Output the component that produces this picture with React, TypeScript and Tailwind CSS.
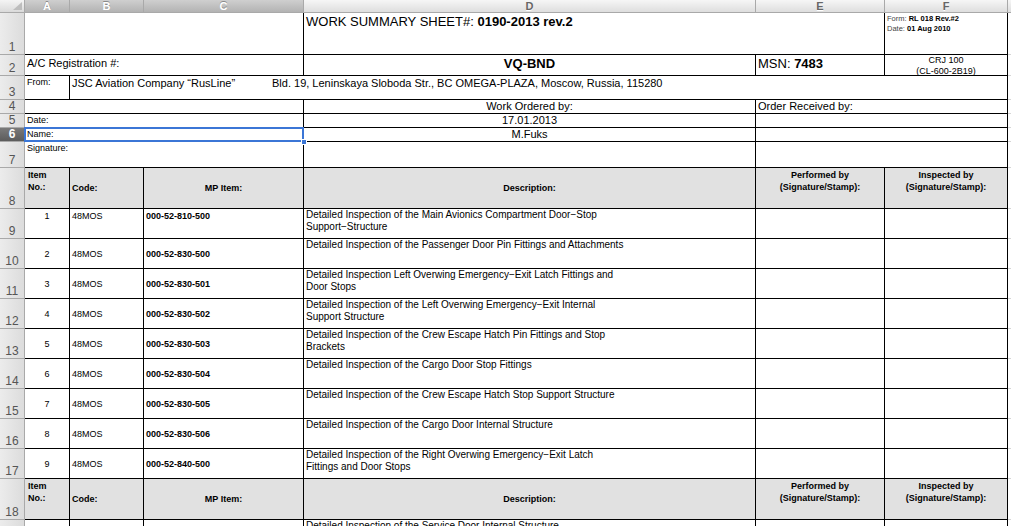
import React from "react";

type CellProps = {
  className?: string;
  children?: React.ReactNode;
};

function Cell({ className = "", children }: CellProps) {
  return <div className={`min-w-0 overflow-hidden whitespace-nowrap ${className}`}>{children}</div>;
}

function RowHead({ n, active = false }: { n?: number; active?: boolean }) {
  return (
    <div
      className={`flex items-end justify-center border-r border-b border-[#a9a9a9] pb-[1px] text-[12px] leading-none ${
        active ? "bg-gradient-to-b from-[#7a7a7a] to-[#5c5c5c] text-white font-bold" : "bg-gradient-to-r from-[#ececec] to-[#dcdcdc] text-[#555]"
      }`}
    >
      {n}
    </div>
  );
}

function Gutter() {
  return <div className="border-b border-[#d6d6d6]" />;
}

const items = [
  { n: 1, mp: "000-52-810-500", d: ["Detailed Inspection of the Main Avionics Compartment Door−Stop", "Support−Structure"] },
  { n: 2, mp: "000-52-830-500", d: ["Detailed Inspection of the Passenger Door Pin Fittings and Attachments"] },
  { n: 3, mp: "000-52-830-501", d: ["Detailed Inspection Left Overwing Emergency−Exit Latch Fittings and", "Door Stops"] },
  { n: 4, mp: "000-52-830-502", d: ["Detailed Inspection of the Left Overwing Emergency−Exit Internal", "Support Structure"] },
  { n: 5, mp: "000-52-830-503", d: ["Detailed Inspection of the Crew Escape Hatch Pin Fittings and Stop", "Brackets"] },
  { n: 6, mp: "000-52-830-504", d: ["Detailed Inspection of the Cargo Door Stop Fittings"] },
  { n: 7, mp: "000-52-830-505", d: ["Detailed Inspection of the Crew Escape Hatch Stop Support Structure"] },
  { n: 8, mp: "000-52-830-506", d: ["Detailed Inspection of the Cargo Door Internal Structure"] },
  { n: 9, mp: "000-52-840-500", d: ["Detailed Inspection of the Right Overwing Emergency−Exit Latch", "Fittings and Door Stops"] },
];

const cols = ["A", "B", "C", "D", "E", "F"];

function TableHeader({ row }: { row: number }) {
  const hd = "bg-[#e1e1e1] border-r border-b border-black text-[9px] font-bold leading-[12px] text-black";
  return (
    <>
      <RowHead n={row} />
      <Cell className={`${hd} px-[3px] pt-[1px] whitespace-normal`}>
        Item
        <br />
        No.:
      </Cell>
      <Cell className={`${hd} flex items-center px-[2px]`}>Code:</Cell>
      <Cell className={`${hd} flex items-center justify-center`}>MP Item:</Cell>
      <Cell className={`${hd} flex items-center justify-center`}>Description:</Cell>
      <Cell className={`${hd} pt-[1px] text-center`}>
        Performed by
        <br />
        (Signature/Stamp):
      </Cell>
      <Cell className={`${hd} pt-[1px] text-center`}>
        Inspected by
        <br />
        (Signature/Stamp):
      </Cell>
      <Gutter />
    </>
  );
}

export default function App() {
  const b = "border-r border-b border-black";
  return (
    <div className="w-[1011px] h-[526px] overflow-hidden bg-white font-['Liberation_Sans',Arial,sans-serif] text-black">
      <div className="grid grid-cols-[25px_45px_74px_160px_452px_129px_123px_3px] grid-rows-[13px_42px_21px_24px_14px_14px_14px_26px_41px_repeat(9,30px)_41px_30px]">
        {/* column letters */}
        <div className="relative border-r border-b border-[#a9a9a9] bg-gradient-to-b from-[#f4f4f4] to-[#dadada]">
          <svg className="absolute right-[2px] bottom-[2px]" width="9" height="8" viewBox="0 0 9 8">
            <polygon points="9,0 9,8 0,8" fill="#bdbdbd" />
          </svg>
        </div>
        {cols.map((c, i) => (
          <div
            key={c}
            className={`flex items-center justify-center border-r border-b border-[#a9a9a9] text-[11px] font-bold leading-none ${
              i < 3
                ? "bg-gradient-to-b from-[#cfcfcf] to-[#b3b3b3] text-white [text-shadow:0_-1px_0_#8a8a8a]"
                : "bg-gradient-to-b from-[#f6f6f6] to-[#dedede] text-[#666] [text-shadow:0_1px_0_#fff]"
            }`}
          >
            {c}
          </div>
        ))}
        <div className="border-b border-[#a9a9a9] bg-gradient-to-b from-[#f6f6f6] to-[#dedede]" />

        {/* row 1 */}
        <RowHead n={1} />
        <Cell className={`col-span-3 ${b}`} />
        <Cell className={`col-span-2 ${b} px-[2px] pt-[1px] text-[13px] leading-[16px]`}>
          WORK SUMMARY SHEET#: <b>0190-2013 rev.2</b>
        </Cell>
        <Cell className={`${b} px-[2px] pt-[1px] text-[7.5px] leading-[10px] text-[#444]`}>
          <div>
            Form: <b className="text-black">RL 018 Rev.#2</b>
          </div>
          <div>
            Date: <b className="text-black">01 Aug 2010</b>
          </div>
        </Cell>
        <Gutter />

        {/* row 2 */}
        <RowHead n={2} />
        <Cell className={`col-span-3 ${b} px-[2px] pt-[1px] text-[11px] leading-[14px]`}>A/C Registration #:</Cell>
        <Cell className={`${b} pt-[1px] text-center text-[13px] font-bold leading-[15px]`}>VQ-BND</Cell>
        <Cell className={`${b} px-[2px] pt-[1px] text-[13px] leading-[15px]`}>
          MSN: <b>7483</b>
        </Cell>
        <Cell className={`${b} text-center text-[9px] leading-[11px]`}>
          CRJ 100
          <br />
          (CL-600-2B19)
        </Cell>
        <Gutter />

        {/* row 3 */}
        <RowHead n={3} />
        <Cell className={`${b} px-[2px] pt-[1px] text-[9px] leading-[11px]`}>From:</Cell>
        <Cell className={`col-span-5 ${b} flex px-[2px] pt-[1px] text-[11px] leading-[13px]`}>
          <span className="w-[200px]">JSC Aviation Company “RusLine”</span>
          <span>Bld. 19, Leninskaya Sloboda Str., BC OMEGA-PLAZA, Moscow, Russia, 115280</span>
        </Cell>
        <Gutter />

        {/* row 4 */}
        <RowHead n={4} />
        <Cell className={`col-span-3 ${b}`} />
        <Cell className={`${b} text-center text-[11px] leading-[13px]`}>Work Ordered by:</Cell>
        <Cell className={`col-span-2 ${b} px-[2px] text-[11px] leading-[13px]`}>Order Received by:</Cell>
        <Gutter />

        {/* row 5 */}
        <RowHead n={5} />
        <Cell className={`col-span-3 ${b} px-[2px] text-[9px] leading-[13px]`}>Date:</Cell>
        <Cell className={`${b} text-center text-[11px] leading-[13px]`}>17.01.2013</Cell>
        <Cell className={`col-span-2 ${b}`} />
        <Gutter />

        {/* row 6 (selected) */}
        <RowHead n={6} active />
        <div className={`relative col-span-3 ${b} px-[2px] text-[9px] leading-[13px]`}>
          Name:
          <div className="absolute -left-[1px] -top-[1px] right-[-1px] bottom-[-1px] border-2 border-[#3b76d6]" />
          <div className="absolute -right-[4px] -bottom-[4px] h-[6px] w-[6px] border border-white bg-[#3b76d6]" />
        </div>
        <Cell className={`${b} text-center text-[11px] leading-[13px]`}>M.Fuks</Cell>
        <Cell className={`col-span-2 ${b}`} />
        <Gutter />

        {/* row 7 */}
        <RowHead n={7} />
        <Cell className={`col-span-3 ${b} px-[2px] text-[9px] leading-[13px]`}>Signature:</Cell>
        <Cell className={b} />
        <Cell className={`col-span-2 ${b}`} />
        <Gutter />

        <TableHeader row={8} />

        {items.map((it, i) => {
          const mid = i === 0 ? "pt-[1px]" : "flex items-center";
          return (
            <React.Fragment key={it.n}>
              <RowHead n={9 + i} />
              <Cell className={`${b} ${mid} justify-center text-center text-[9px] leading-[12px]`}>{it.n}</Cell>
              <Cell className={`${b} ${mid} px-[2px] text-[9px] leading-[12px]`}>48MOS</Cell>
              <Cell className={`${b} ${mid} px-[2px] text-[9px] font-bold leading-[12px]`}>{it.mp}</Cell>
              <Cell className={`${b} px-[2px] text-[10px] leading-[12px]`}>
                {it.d.map((l) => (
                  <div key={l}>{l}</div>
                ))}
              </Cell>
              <Cell className={b} />
              <Cell className={b} />
              <Gutter />
            </React.Fragment>
          );
        })}

        <TableHeader row={18} />

        {/* row 19, cut off by the window; its number sits below the fold */}
        <RowHead />
        <Cell className={b} />
        <Cell className={b} />
        <Cell className={b} />
        <Cell className={`${b} px-[2px] text-[10px] leading-[12px]`}>Detailed Inspection of the Service Door Internal Structure</Cell>
        <Cell className={b} />
        <Cell className={b} />
        <Gutter />
      </div>
    </div>
  );
}
